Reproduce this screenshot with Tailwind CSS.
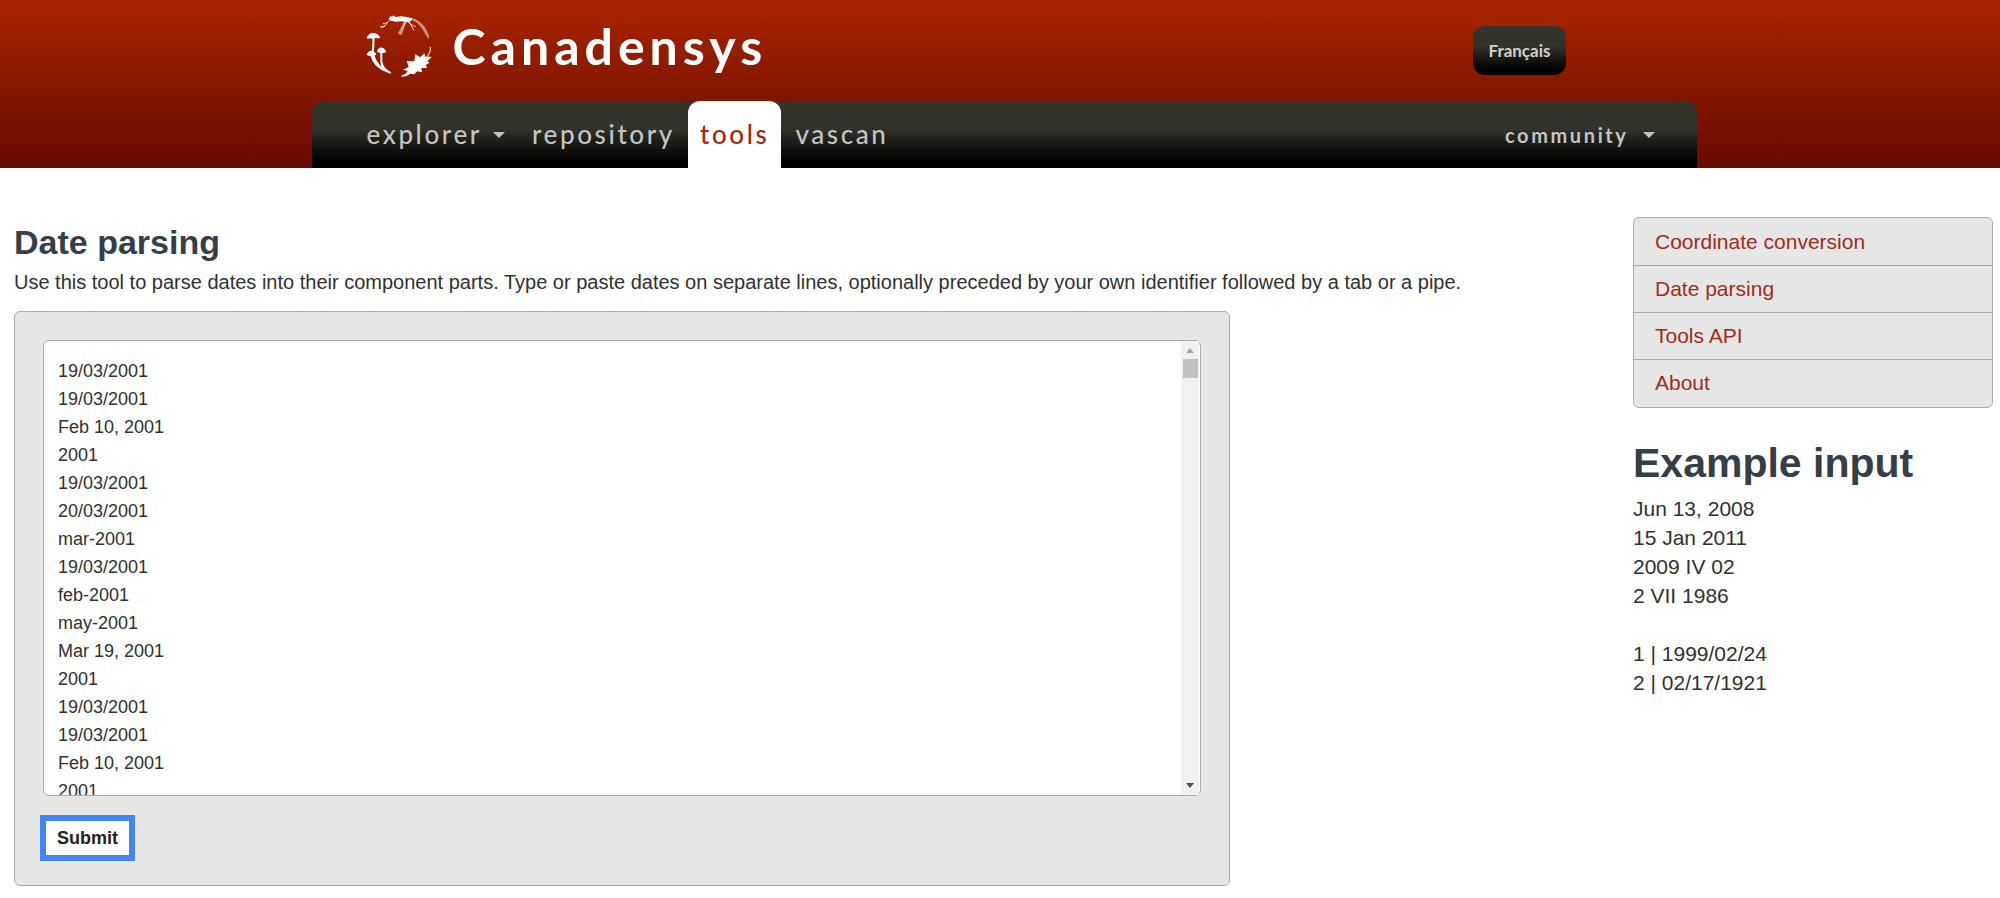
<!DOCTYPE html>
<html lang="en">
<head>
<meta charset="utf-8">
<title>Date parsing - Canadensys</title>
<script src="https://cdn.jsdelivr.net/npm/@tailwindcss/browser@4"></script>
</head>
<body class="bg-white font-['Liberation_Sans',Arial,sans-serif] text-[#2f3133]">
<header class="bg-linear-to-b from-[#a92500] to-[#680a00] pl-2 font-['Lato',sans-serif]">
  <div class="mx-auto w-[1385px] max-w-full">
    <div class="flex h-[101px] items-start justify-between pl-[54px] pr-[131px]">
      <a href="#" class="flex items-center gap-[20px] pt-[14px] text-white">
        <svg class="h-[63px] w-[67px]" viewBox="45 40 201 189" fill="none" stroke="#fff" stroke-linecap="round" aria-hidden="true">
          <path fill="#fff" stroke="none" d="M113 54 L118 47 L124 48 L127 44 L133 49 L150 47 L168 49 L184 53 L181 61 L168 64 L150 62 L134 63 L119 60 Z"/>
          <path stroke-width="3" opacity=".8" d="M117 57 L109 66 L101 76 L88 79 M109 66 L97 69 M101 76 L93 81 M168 62 L188 76 L193 77 M172 60 L181 76 L188 88 M165 62 L160 72"/>
          <path fill="#fff" stroke="none" opacity=".55" d="M158 64 L166 64 L152 103 L141 99 Z"/>
          <path fill="#fff" stroke="none" opacity=".5" d="M180 52 C203 55 226 77 234 106 L233 116 L222 99 C212 78 198 62 180 57Z"/>
          <path fill="#fff" stroke="none" d="M47 112 C51 100 60 96 67 97 C76 96 85 103 88 111 C80 115 73 111 67 114 C60 112 54 116 47 112Z M47 163 C49 154 55 150 62 150 C69 151 74 155 76 162 C68 166 55 167 47 163Z M78 153 C80 144 86 140 93 141 C99 142 104 147 106 154 C98 158 84 158 78 153Z"/>
          <path stroke-width="6" d="M67 112 C69 130 65 141 66 154 M61 164 C66 184 76 201 110 213 M67 164 C72 184 84 202 116 216 M91 155 L91 182 C92 196 101 208 117 216"/>
          <path stroke-width="4" opacity=".7" d="M238 140 C239 149 237 158 228 168"/>
          <path fill="#fff" stroke="none" d="M151 225 C162 222 167 217 170 211 L156 207 L173 199 L167 181 L190 182 L193 161 L207 170 L220 158 L223 168 L242 168 L229 182 L236 186 L224 193 L229 202 L211 202 L213 215 L198 212 L190 221 L178 219 C170 225 162 227 152 228Z"/>
        </svg>
        <span class="text-[50px] leading-[60px] font-bold tracking-widest">Canadensys</span>
      </a>
      <a href="#" class="mt-[26px] flex h-[49px] items-center rounded-xl bg-linear-to-b from-[#33342c] from-40% via-[#0a0a08] via-80% to-black px-[15px] text-[17px] font-bold text-[#d0d0cc]">Français</a>
    </div>
    <nav class="flex h-[67px] rounded-t-xl bg-linear-to-b from-[#33342c] from-40% via-[#0a0a08] via-80% to-black pl-[41px] pr-[28px] text-[26px] font-medium tracking-widest text-[#c4c4c4]">
      <a href="#" class="flex items-center gap-[11px] px-[14px]">explorer
        <svg class="h-[6px] w-[12px]" viewBox="0 0 12 6" fill="currentColor" aria-hidden="true"><path d="M0 0H12L6 6Z"/></svg>
      </a>
      <a href="#" class="flex items-center px-[13px]">repository</a>
      <a href="#" class="flex items-center rounded-t-xl bg-white px-[12px] text-[#a02808]">tools</a>
      <a href="#" class="flex items-center px-[14px]">vascan</a>
      <a href="#" class="ml-auto flex items-center gap-[14px] px-[14px] text-[20px] font-bold">community
        <svg class="h-[6px] w-[12px]" viewBox="0 0 12 6" fill="currentColor" aria-hidden="true"><path d="M0 0H12L6 6Z"/></svg>
      </a>
    </nav>
  </div>
</header>

<div class="flex items-start pr-[7px] pl-[14px]">
  <main class="min-w-0 flex-1 pt-[54px]">
    <h1 class="text-[34px] leading-[40px] font-bold text-[#363e47]">Date parsing</h1>
    <p class="pt-[6px] text-[20px] leading-[29px]">Use this tool to parse dates into their component parts. Type or paste dates on separate lines, optionally preceded by your own identifier followed by a tab or a pipe.</p>
    <form class="mt-[14px] w-[1216px] max-w-full rounded-md border border-[#ababab] bg-[#e6e6e6] px-[28px] pt-[28px] pb-[24px]">
      <div class="relative flex">
        <textarea aria-label="Dates" class="h-[456px] w-full resize-none overflow-hidden rounded-md border border-[#ababab] bg-white px-[14px] pt-[16px] text-[18px] leading-[28px]">19/03/2001
19/03/2001
Feb 10, 2001
2001
19/03/2001
20/03/2001
mar-2001
19/03/2001
feb-2001
may-2001
Mar 19, 2001
2001
19/03/2001
19/03/2001
Feb 10, 2001
2001</textarea>
        <div class="absolute top-px right-[2px] bottom-px flex w-[18px] flex-col items-center bg-[#f1f1f1] pt-[7px] pb-[7px]" aria-hidden="true">
          <svg class="h-[5px] w-[8px]" viewBox="0 0 8 5" fill="#a3a3a3"><path d="M0 5H8L4 0Z"/></svg>
          <div class="mt-[6px] h-[19px] w-[15px] bg-[#c1c1c1]"></div>
          <svg class="mt-auto h-[5px] w-[8px]" viewBox="0 0 8 5" fill="#505050"><path d="M0 0H8L4 5Z"/></svg>
        </div>
      </div>
      <button type="button" class="mt-[19px] -ml-[3px] border-[6px] border-[#4285f4] bg-white px-[11px] text-[18px] leading-[34px] font-bold text-[#222]">Submit</button>
    </form>
  </main>
  <aside class="w-[360px] pt-[49px]">
    <ul class="divide-y divide-[#ababab] rounded-md border border-[#ababab] bg-[#e6e6e6] py-px text-[21px] leading-[46px] text-[#a02c18]">
      <li class="px-[21px]"><a href="#">Coordinate conversion</a></li>
      <li class="px-[21px]"><a href="#">Date parsing</a></li>
      <li class="px-[21px]"><a href="#">Tools API</a></li>
      <li class="px-[21px]"><a href="#">About</a></li>
    </ul>
    <h2 class="pt-[31px] text-[41px] leading-[48px] font-bold text-[#363e47]">Example input</h2>
    <p class="pt-[7px] text-[21px] leading-[29px]">Jun 13, 2008<br>15 Jan 2011<br>2009 IV 02<br>2 VII 1986<br><br>1 | 1999/02/24<br>2 | 02/17/1921</p>
  </aside>
</div>
</body>
</html>
